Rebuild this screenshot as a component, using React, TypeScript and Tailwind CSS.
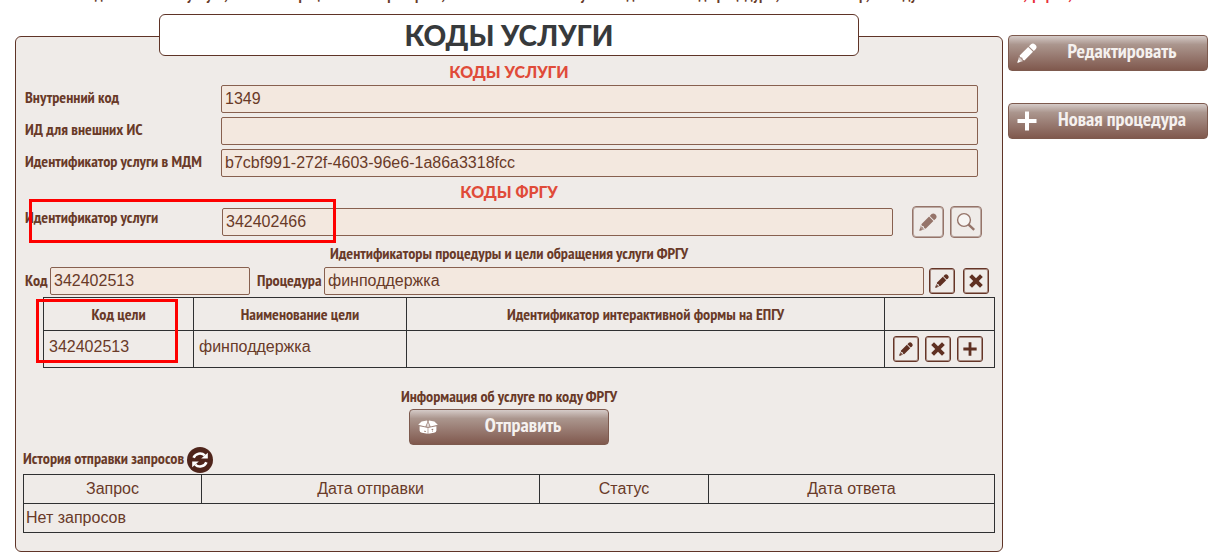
import React from "react";

const narrow = "font-['PT_Sans_Narrow','Liberation_Sans_Narrow','Open_Sans',sans-serif] font-bold";
const field =
  "h-7 min-w-0 rounded-xs border border-[#87604f] bg-[#f3e8df] px-[3px] text-base text-[#693a28] font-['Liberation_Sans',sans-serif]";
const label = "font-['PT_Sans_Narrow','Liberation_Sans_Narrow','Open_Sans',sans-serif] font-bold text-base leading-5 text-[#693a28]";

function Pencil({ className = "" }: { className?: string }) {
  return (
    <svg viewBox="0 0 20 20" className={className} fill="currentColor" aria-hidden="true">
      <path d="M12 3.2 16.8 8 18.8 6Q20.4 4 18.6 2L18 1.4Q16-.4 14 1.2Z" />
      <path d="M11.2 4 16 8.8 7.4 17.4 5.8 16.8 5.2 14.8 3.2 14.2 2.6 12.6Z" />
      <path d="M2 13.6 2.8 15.2 4.4 15.6 4.8 17.2 6.4 18 .4 19.8Z" opacity=".7" />
      <path d="M1.3 16.6 3.6 18.8.4 19.8Z" />
    </svg>
  );
}

function Cross() {
  return (
    <svg viewBox="0 0 14 14" className="size-3.5" fill="currentColor" aria-hidden="true">
      <path d="M3 .2 7 4.2 11 .2 13.8 3 9.8 7 13.8 11 11 13.8 7 9.8 3 13.8.2 11 4.2 7 .2 3Z" />
    </svg>
  );
}

function Plus({ className = "" }: { className?: string }) {
  return (
    <svg viewBox="0 0 20 20" className={className} fill="currentColor" aria-hidden="true">
      <path d="M8 .5H12V8H19.5V12H12V19.5H8V12H.5V8H8Z" />
    </svg>
  );
}

function Magnifier() {
  return (
    <svg viewBox="0 0 20 20" className="size-5" fill="none" stroke="currentColor" aria-hidden="true">
      <circle cx="8" cy="8" r="6.4" fill="#f7f5f3" strokeWidth="1.4" />
      <path d="m12.6 12.6 5.6 5.2" strokeWidth="2.4" />
    </svg>
  );
}

function Parcel() {
  return (
    <svg viewBox="0 0 20 14" className="h-3.5 w-5" fill="currentColor" aria-hidden="true">
      <path d="M3.6 1.6 9 .6 9.4 2 7.4 6.4.2 4.8Z" />
      <path d="M16.4 1.6 11 .6 10.6 2 12.6 6.4 19.8 4.8Z" />
      <path d="M10 2.4 11.6 6.2 10.3 7.4 10 5 9.7 7.4 8.4 6.2Z" opacity=".75" />
      <path
        d="M1.6 6.2 7.8 7.6 9.7 8V13.7L4 12.8Q1.6 12.4 1.6 10.6ZM6.2 10.8V11.7H8V11Z"
        fillRule="evenodd"
      />
      <path
        d="M18.4 6.2 12.2 7.6 10.3 8V13.7L16 12.8Q18.4 12.4 18.4 10.6ZM13.6 9V10H15.2V8.8ZM14 10.8V11.6H15V10.6Z"
        fillRule="evenodd"
      />
    </svg>
  );
}

function Refresh() {
  return (
    <svg viewBox="0 0 26 26" className="size-[26px]" aria-hidden="true">
      <circle cx="13" cy="13" r="13" fill="#4f251b" />
      <path d="M6.6 10.8C8.4 6.2 14.4 5.2 17.8 8.4" fill="none" stroke="#fff" strokeWidth="2.6" />
      <path d="M20.8 5.8V11.6H14.2Z" fill="#fff" />
      <path d="M19.4 15.2C17.6 19.8 11.6 20.8 8.2 17.6" fill="none" stroke="#fff" strokeWidth="2.6" />
      <path d="M5.2 20.2V14.4H11.8Z" fill="#fff" />
    </svg>
  );
}

function ActionButton({ icon, children }: { icon: React.ReactNode; children: React.ReactNode }) {
  return (
    <button
      type="button"
      className="flex h-9 w-[200px] items-center rounded border border-[#7d5a4e] bg-linear-to-b from-[#d5cbc8] via-[#ab968e] via-25% to-[#80594e] pl-2 text-[#f5f1ef]"
    >
      <span className="flex w-5 shrink-0 justify-center text-white">{icon}</span>
      <span className={`${narrow} flex-1 pb-1 text-center text-xl leading-6`}>{children}</span>
    </button>
  );
}

function IconButton({ title, children }: { title: string; children: React.ReactNode }) {
  return (
    <button
      type="button"
      aria-label={title}
      className="flex size-[26px] shrink-0 items-center justify-center rounded-[3px] border border-[#653527] text-[#5f3022] inset-ring inset-ring-[#a98d83]"
    >
      {children}
    </button>
  );
}

function LargeIconButton({ title, children }: { title: string; children: React.ReactNode }) {
  return (
    <button
      type="button"
      aria-label={title}
      className="flex size-8 shrink-0 items-center justify-center rounded border border-[#957469] text-[#957469] inset-ring inset-ring-[#bba8a1]"
    >
      {children}
    </button>
  );
}

function Row({ id, text, value }: { id: string; text: string; value: string }) {
  return (
    <div className="flex h-7 items-center">
      <label htmlFor={id} className={`${label} w-[196px] shrink-0 pb-1`}>
        {text}
      </label>
      <input id={id} defaultValue={value} className={`${field} flex-1`} />
    </div>
  );
}

function SectionTitle({ children }: { children: React.ReactNode }) {
  return (
    <h2 className="text-center font-['Lato',sans-serif] text-base leading-6 font-black text-[#e04b39]">{children}</h2>
  );
}

export default function App() {
  return (
    <div className="min-h-screen bg-white">
      <div className="flex h-3.5 items-start overflow-hidden pl-20">
        <p className={`${label} -mt-4 whitespace-nowrap`}>
          Код новой и иной услуги, а также операции можно проверить, если вначале на сайте указать данные и код
          процедуры, а также номер, по коду
          <span className="text-[#e8303a]"> и понятной новой, форма,</span>
        </p>
      </div>
      <div className="flex items-start gap-[5px] pr-[3px] pl-[15px]">
        <main className="relative min-w-0 flex-1">
          <div className="relative z-10 mx-auto flex h-[42px] max-w-[700px] items-center justify-center rounded-md border border-[#5f3427] bg-white">
            <h1 className="font-['Lato',sans-serif] text-[28px] leading-9 font-black text-[#373a3c]">КОДЫ УСЛУГИ</h1>
          </div>
          <div className="-mt-5 rounded-md border border-[#5f3427] bg-[#efebe8] pt-[23px] pr-[7px] pb-[18px] pl-[7px]">
            <SectionTitle>КОДЫ УСЛУГИ</SectionTitle>
            <div className="mt-px flex flex-col gap-1 pr-[17px] pl-0.5">
              <Row id="internal" text="Внутренний код" value="1349" />
              <Row id="external" text="ИД для внешних ИС" value="" />
              <Row id="mdm" text="Идентификатор услуги в МДМ" value="b7cbf991-272f-4603-96e6-1a86a3318fcc" />
            </div>
            <div className="pt-[3px]">
              <SectionTitle>КОДЫ ФРГУ</SectionTitle>
            </div>
            <div className="relative mt-0.5 flex h-8 items-center pr-[13px] pl-0.5">
              <label htmlFor="service" className={`${label} w-[197px] shrink-0 pb-2.5`}>
                Идентификатор услуги
              </label>
              <input id="service" defaultValue="342402466" className={`${field} flex-1`} />
              <div className="ml-[19px] flex gap-1.5">
                <LargeIconButton title="Изменить услугу">
                  <Pencil className="size-[18px]" />
                </LargeIconButton>
                <LargeIconButton title="Найти услугу">
                  <Magnifier />
                </LargeIconButton>
              </div>
              <div className="pointer-events-none absolute -top-[7px] left-1.5 h-11 w-[307px] border-3 border-[#fe0000]" />
            </div>
            <p className={`${label} mt-[5px] text-center`}>Идентификаторы процедуры и цели обращения услуги ФРГУ</p>
            <div className="mt-1 flex h-7 items-center pr-1.5 pl-0.5">
              <label htmlFor="code" className={`${label} w-[25px] shrink-0 pb-0.5 whitespace-nowrap`}>
                Код
              </label>
              <input id="code" defaultValue="342402513" className={`${field} w-[200px]`} />
              <label htmlFor="procedure" className={`${label} w-[74px] shrink-0 pb-0.5 pl-[7px] whitespace-nowrap`}>
                Процедура
              </label>
              <input id="procedure" defaultValue="финподдержка" className={`${field} flex-1`} />
              <div className="ml-[5px] flex gap-2">
                <IconButton title="Изменить процедуру">
                  <Pencil className="size-3.5" />
                </IconButton>
                <IconButton title="Удалить процедуру">
                  <Cross />
                </IconButton>
              </div>
            </div>
            <div className="relative mt-0.5 ml-5">
              <table className="w-full table-fixed border-collapse text-[#693a28]">
                <colgroup>
                  <col className="w-[150px]" />
                  <col className="w-[213px]" />
                  <col />
                  <col className="w-[110px]" />
                </colgroup>
                <thead>
                  <tr className={`${label} h-[33px]`}>
                    <th className="border border-[#2f3031]">Код цели</th>
                    <th className="border border-[#2f3031]">Наименование цели</th>
                    <th className="border border-[#2f3031]">Идентификатор интерактивной формы на ЕПГУ</th>
                    <th className="border border-[#2f3031]" aria-label="Действия" />
                  </tr>
                </thead>
                <tbody>
                  <tr className="h-[37px] font-['Liberation_Sans',sans-serif] text-base leading-6">
                    <td className="border border-[#2f3031] px-[5px] pb-1">342402513</td>
                    <td className="border border-[#2f3031] px-[5px] pb-1">финподдержка</td>
                    <td className="border border-[#2f3031]" />
                    <td className="border border-[#2f3031] px-2">
                      <div className="flex gap-1.5">
                        <IconButton title="Изменить цель">
                          <Pencil className="size-3.5" />
                        </IconButton>
                        <IconButton title="Удалить цель">
                          <Cross />
                        </IconButton>
                        <IconButton title="Добавить цель">
                          <Plus className="size-3.5" />
                        </IconButton>
                      </div>
                    </td>
                  </tr>
                </tbody>
              </table>
              <div className="pointer-events-none absolute top-0.5 -left-[7px] h-16 w-[142px] border-3 border-[#fe0000]" />
            </div>
            <div className="mt-[18px] flex flex-col items-center">
              <p className={label}>Информация об услуге по коду ФРГУ</p>
              <div className="mt-[3px]">
                <ActionButton icon={<Parcel />}>Отправить</ActionButton>
              </div>
            </div>
            <div className="mt-0.5 flex h-[26px] items-center gap-[3px]">
              <h3 className={`${label} pb-1`}>История отправки запросов</h3>
              <button type="button" aria-label="Обновить">
                <Refresh />
              </button>
            </div>
            <table className="mt-px w-full table-fixed border-collapse font-['Liberation_Sans',sans-serif] text-base leading-6 text-[#693a28]">
              <colgroup>
                <col className="w-[178px]" />
                <col className="w-[338px]" />
                <col className="w-[169px]" />
                <col />
              </colgroup>
              <thead>
                <tr className="h-[29px]">
                  <th className="border border-[#2f3031] font-normal">Запрос</th>
                  <th className="border border-[#2f3031] font-normal">Дата отправки</th>
                  <th className="border border-[#2f3031] font-normal">Статус</th>
                  <th className="border border-[#2f3031] font-normal">Дата ответа</th>
                </tr>
              </thead>
              <tbody>
                <tr className="h-[29px]">
                  <td colSpan={4} className="border border-[#2f3031] px-0.5">
                    Нет запросов
                  </td>
                </tr>
              </tbody>
            </table>
          </div>
        </main>
        <aside className="mt-[21px] flex flex-col gap-8">
          <ActionButton icon={<Pencil className="size-5" />}>Редактировать</ActionButton>
          <ActionButton icon={<Plus className="size-5" />}>Новая процедура</ActionButton>
        </aside>
      </div>
    </div>
  );
}
